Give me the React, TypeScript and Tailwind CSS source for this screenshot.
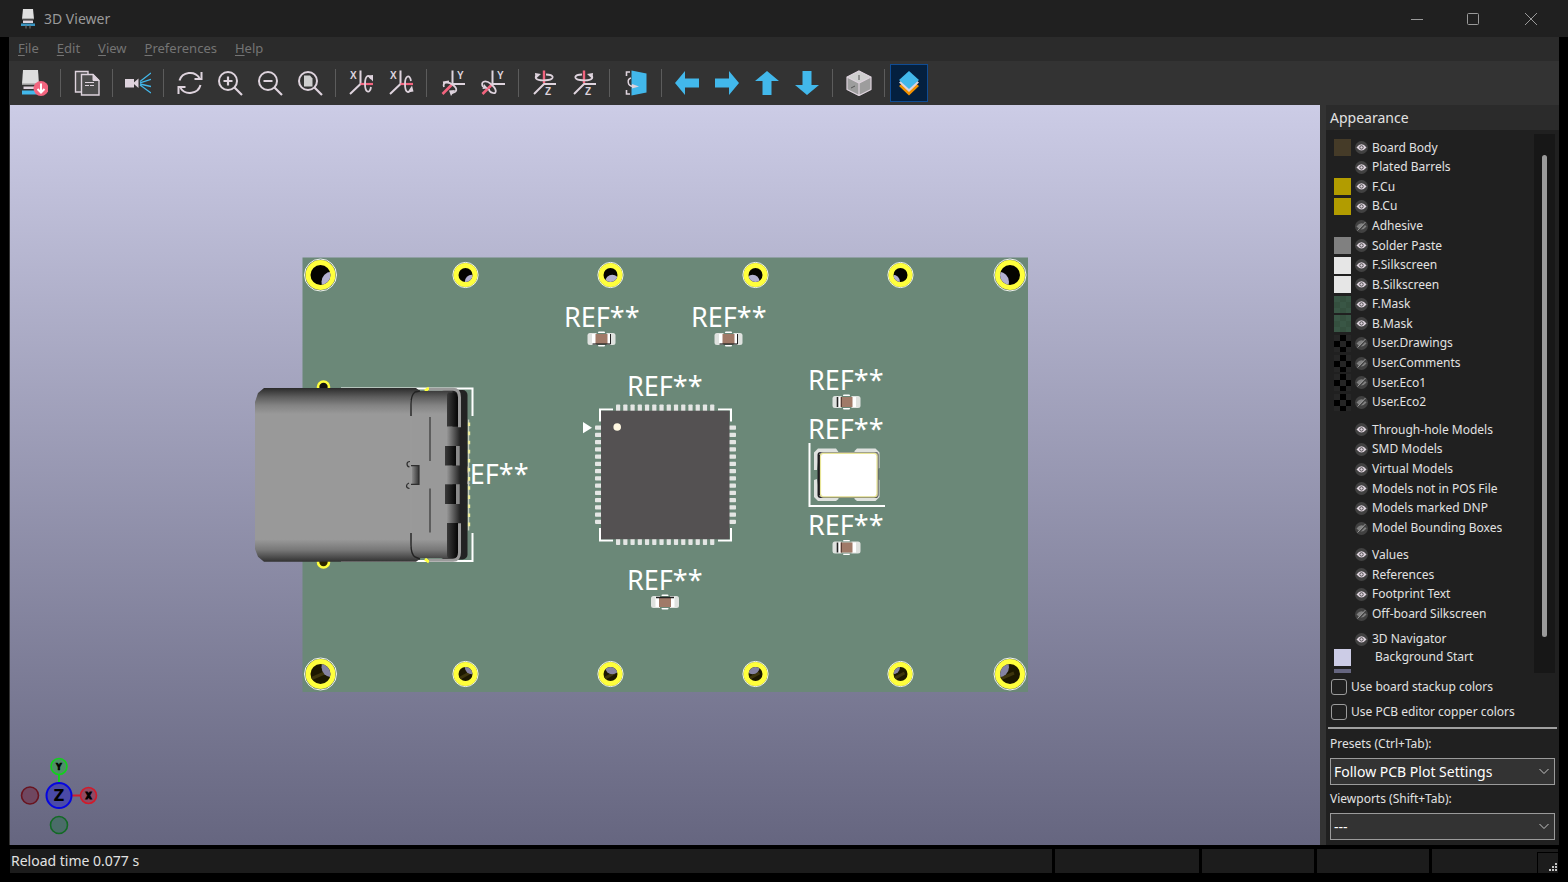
import type { ReactNode } from 'react';

type Layer = { name: string; swatch?: string; off?: boolean };

const CHECKER = 'bg-[repeating-conic-gradient(#000000_0_25%,#262626_0_50%)] bg-size-[12px_12px]';
const MASK = 'bg-[repeating-conic-gradient(#35503f_0_25%,#395645_0_50%)] bg-size-[12px_12px]';

const layers: Layer[] = [
  { name: 'Board Body', swatch: 'bg-[#453b28]' },
  { name: 'Plated Barrels' },
  { name: 'F.Cu', swatch: 'bg-[#b29c00]' },
  { name: 'B.Cu', swatch: 'bg-[#b29c00]' },
  { name: 'Adhesive', off: true },
  { name: 'Solder Paste', swatch: 'bg-[#808080]' },
  { name: 'F.Silkscreen', swatch: 'bg-[#e6e6e6]' },
  { name: 'B.Silkscreen', swatch: 'bg-[#e6e6e6]' },
  { name: 'F.Mask', swatch: MASK },
  { name: 'B.Mask', swatch: MASK },
  { name: 'User.Drawings', swatch: CHECKER, off: true },
  { name: 'User.Comments', swatch: CHECKER, off: true },
  { name: 'User.Eco1', swatch: CHECKER, off: true },
  { name: 'User.Eco2', swatch: CHECKER, off: true },
];

const models: Layer[] = [
  { name: 'Through-hole Models' },
  { name: 'SMD Models' },
  { name: 'Virtual Models' },
  { name: 'Models not in POS File' },
  { name: 'Models marked DNP' },
  { name: 'Model Bounding Boxes', off: true },
];

const texts: Layer[] = [
  { name: 'Values' },
  { name: 'References' },
  { name: 'Footprint Text' },
  { name: 'Off-board Silkscreen', off: true },
];

/* ---------- toolbar icons ---------- */

const INK = '#ded3dd';
const BLUE = '#42b8eb';
const RED = '#f2647e';

function Icon({ children }: { children: ReactNode }) {
  return (
    <svg width="26" height="26" viewBox="0 0 26 26" fill="none" stroke={INK} strokeWidth="1.8">
      {children}
    </svg>
  );
}

function Letter({ x, y, children }: { x: number; y: number; children: string }) {
  return (
    <text x={x} y={y} fill={INK} stroke="none" fontSize="10" fontWeight="700" fontFamily="Liberation Sans, sans-serif">
      {children}
    </text>
  );
}

const ReloadBoard = (
  <Icon>
    <g stroke="none">
      <path d="M1 0h15l1 14H0z" fill="#dedede" />
      <path d="M0 13.500h17v1.500H0z" fill="#999" />
      <path d="M1.500 16.500h14v2.500h-14z" fill={INK} />
      <path d="M0 20.500h17v4H0z" fill={BLUE} />
      <circle cx="19" cy="18.500" r="7.500" fill={RED} />
    </g>
    <path d="M19 13.500v8.500M15.500 19l3.500 3.500 3.500-3.500" stroke="#fff" strokeWidth="2" />
  </Icon>
);
const Copy = (
  <Icon>
    <path d="M14 22H1.500V1.500H14V5" strokeWidth="1.400" fill="#4c4c4c" />
    <path d="M7.500 4.500H19l6 6v14.500H7.500z" strokeWidth="1.400" fill="#4c4c4c" />
    <path d="M19 4.500v6h6z" fill={INK} strokeWidth="1" />
    <path d="M11 12.500h9M11 15.500h4M16 15.500h4" strokeWidth="1.200" />
  </Icon>
);
const Camera = (
  <Icon>
    <path d="M0 9h9v8.500H0zM8 13.200l5.500-4.700v9.500z" fill={INK} stroke="none" />
    <path d="M15 11.500L26 3M15 12.800l11-3.500M15 14l11 2.500M15 15l11 8" stroke={BLUE} strokeWidth="1.300" />
  </Icon>
);
const Refresh = (
  <Icon>
    <path d="M2.500 10.500A11 10.500 0 0 1 22.500 8M23.500 15A11 10.500 0 0 1 3.500 18" strokeWidth="2" />
    <path d="M24.500 2v7h-7M1.500 24v-7h7" strokeWidth="2" />
  </Icon>
);
const ZoomIn = (
  <Icon>
    <circle cx="11" cy="11" r="9" strokeWidth="2" />
    <path d="M17.500 17.500L25 25M6.500 11h9M11 6.500v9" strokeWidth="2.200" />
  </Icon>
);
const ZoomOut = (
  <Icon>
    <circle cx="11" cy="11" r="9" strokeWidth="2" />
    <path d="M17.500 17.500L25 25M6.500 11h9" strokeWidth="2.200" />
  </Icon>
);
const ZoomFit = (
  <Icon>
    <path d="M7 5.500h6l2.500 3v8H7z" fill="#cfcfcf" stroke="none" />
    <circle cx="11" cy="11" r="9" strokeWidth="2" />
    <path d="M17.500 17.500L25 25" strokeWidth="2.200" />
  </Icon>
);

function RotateX({ flip }: { flip?: boolean }) {
  return (
    <Icon>
      <Letter x={2} y={9}>X</Letter>
      <path d="M12.500 .5v13.500L2 24" strokeWidth="2" />
      <path d="M12.500 14H25" stroke={RED} strokeWidth="2.200" />
      {flip ? (
        <>
          <path d="M23 11c-1-7-6-6-6 3s4 10 6 5" />
          <path d="M19.500 22.500l6-1-1.500-6z" fill={INK} stroke="none" />
        </>
      ) : (
        <>
          <path d="M23 17c-1 7-6 6-6-3s4-10 6-5" />
          <path d="M19.500 5.500l5.500-.5v6.500z" fill={INK} stroke="none" />
        </>
      )}
    </Icon>
  );
}

function RotateY({ flip }: { flip?: boolean }) {
  return (
    <Icon>
      <Letter x={17} y={9}>Y</Letter>
      <path d="M12.500 .5V14H25" strokeWidth="2" />
      <path d="M12 14.500L2.500 24" stroke={RED} strokeWidth="2.600" />
      {flip ? (
        <>
          <path d="M3 17c-3-5 2-8 8-3s6 10 2 9-4-3-4-4" />
          <path d="M2.500 19l5.500-.5-4-4.500z" fill={INK} stroke="none" />
        </>
      ) : (
        <>
          <path d="M4 17c-2-5 4-6 9-2s4 7-1 8M3 12.500l6-1" />
          <path d="M9 20.500l6-.5-4 6z" fill={INK} stroke="none" />
        </>
      )}
    </Icon>
  );
}

function RotateZ({ flip }: { flip?: boolean }) {
  return (
    <Icon>
      <Letter x={14} y={24.5}>Z</Letter>
      <path d="M13 .5V13" stroke={RED} strokeWidth="2.400" />
      <path d="M25 14H13L3 24" strokeWidth="2" />
      {flip ? (
        <>
          <path d="M11 4.500C3 4.500 2 9 9 10s14 0 12-4" />
          <path d="M16 4l6-1-.5 6z" fill={INK} stroke="none" />
        </>
      ) : (
        <>
          <path d="M15 4.500C23 4.500 24 9 17 10S3 10 5 6" />
          <path d="M10 4L4 3l.5 6z" fill={INK} stroke="none" />
        </>
      )}
    </Icon>
  );
}

const FlipBoard = (
  <Icon>
    <path d="M7 2H3.500v4M3.500 20v4H7" strokeWidth="1.600" />
    <path d="M8.500 .5l15 3v19l-15 3z" fill={BLUE} stroke="none" />
    <path d="M8 8c-4 1-4 8 2 8.500" strokeWidth="1.500" />
    <path d="M9 14l7 2.500-7 2z" fill={INK} stroke="none" />
  </Icon>
);

function Arrow({ d }: { d: string }) {
  return (
    <Icon>
      <path d={d} fill={BLUE} stroke="none" />
    </Icon>
  );
}

const Cube = (
  <Icon>
    <path d="M13 1l12 6v13l-12 6-12-6V7z" fill="#9d9d9d" stroke="none" />
    <path d="M13 1l12 6-12 6L1 7z" fill="#cfcfcf" stroke="none" />
    <path d="M13 1l12 6v12.500L13 25.500 1 19.500V7zM1 7l12 6 12-6M13 13v12.500" strokeWidth="1.200" />
    <path d="M13 5v5M5 18l4-2" stroke="#555" strokeWidth="1" />
  </Icon>
);
const LayersIcon = (
  <Icon>
    <g stroke="none">
      <path d="M3 16l10 9.500L23 16l-3-2.500-7 6-7-6z" fill="#f29100" />
      <path d="M3 12.500L13 22l10-9.500-3-2.500-7 6-7-6z" fill={INK} />
      <path d="M13 1l10 9-10 9L3 10z" fill={BLUE} />
    </g>
  </Icon>
);

const toolGroups: { label: string; icon: ReactNode; active?: boolean }[][] = [
  [{ label: 'Reload board', icon: ReloadBoard }],
  [{ label: 'Copy image', icon: Copy }],
  [{ label: 'Raytracing', icon: Camera }],
  [
    { label: 'Redraw', icon: Refresh },
    { label: 'Zoom in', icon: ZoomIn },
    { label: 'Zoom out', icon: ZoomOut },
    { label: 'Zoom to fit', icon: ZoomFit },
  ],
  [
    { label: 'Rotate X clockwise', icon: <RotateX /> },
    { label: 'Rotate X counterclockwise', icon: <RotateX flip /> },
  ],
  [
    { label: 'Rotate Y clockwise', icon: <RotateY /> },
    { label: 'Rotate Y counterclockwise', icon: <RotateY flip /> },
  ],
  [
    { label: 'Rotate Z clockwise', icon: <RotateZ /> },
    { label: 'Rotate Z counterclockwise', icon: <RotateZ flip /> },
  ],
  [{ label: 'Flip board', icon: FlipBoard }],
  [
    { label: 'Pan left', icon: <Arrow d="M1 13L11 1v7.500h14v9H11V25z" /> },
    { label: 'Pan right', icon: <Arrow d="M25 13L15 1v7.500H1v9h14V25z" /> },
    { label: 'Pan up', icon: <Arrow d="M13 1l12 10h-7.500v14h-9V11H1z" /> },
    { label: 'Pan down', icon: <Arrow d="M13 25L1 15h7.500V1h9v14H25z" /> },
  ],
  [{ label: 'Orthographic projection', icon: Cube }],
  [{ label: 'Appearance manager', icon: LayersIcon, active: true }],
];

/* ---------- 3D scene ---------- */

const CENTER = { x: 665, y: 474 };

// plated hole; the back opening drifts towards the board centre
function Hole({ x, y, big }: { x: number; y: number; big?: boolean }) {
  const id = `hole-${x}-${y}`;
  const r = big ? 10 : 7;
  const low = y > CENTER.y;
  return (
    <g>
      <clipPath id={id}>
        <circle cx={x} cy={y} r={r} />
      </clipPath>
      <circle cx={x} cy={y} r={big ? 16 : 12.6} fill="#58706a" stroke="#f2f5ee" strokeWidth="1" />
      <circle cx={x} cy={y} r={big ? 15 : 12} fill="#ffff3c" />
      <circle cx={x} cy={y} r={r} fill={low ? '#1c1800' : '#050400'} />
      {low && <path d={`M${x - r} ${y + 5}L${x + 4} ${y - 1}`} stroke="#3d350c" strokeWidth="3" clipPath={`url(#${id})`} />}
      <circle
        cx={x + (CENTER.x - x) * 0.032}
        cy={y + (CENTER.y - y) * 0.034}
        r={r}
        fill={low ? '#8583a2' : '#b3b1d0'}
        clipPath={`url(#${id})`}
      />
    </g>
  );
}

function Ref({ x, y }: { x: number; y: number }) {
  return (
    <text x={x} y={y} fill="#fff" fontSize="27" fontFamily="Noto Sans, sans-serif">
      REF**
    </text>
  );
}

function Capacitor({ x, y, edge }: { x: number; y: number; edge: 'top' | 'bottom' | 'left' }) {
  return (
    <g transform={`translate(${x} ${y})`}>
      <path d="M-2.500-6.500h5M-2.500 6.500h5" stroke="#fff" strokeWidth="2" strokeLinecap="round" />
      <rect x="-14" y="-6" width="28" height="12" rx="2.500" fill="#dfe2df" />
      <rect x="-5" y="-6" width="10" height="12" fill="#6b8878" />
      <rect x="-9.500" y="-5" width="19" height="10" fill="#fff" />
      <rect x="-6" y="-5" width="12" height="10" fill="#a07a68" />
      {edge === 'top' && <path d="M-9-4.500H9" stroke="#222" strokeWidth="1.500" />}
      {edge === 'bottom' && <path d="M-9 5H9" stroke="#222" strokeWidth="1.200" />}
      {edge === 'bottom' && <path d="M9-5V5" stroke="#222" strokeWidth="1" />}
      {edge === 'left' && <path d="M-9-5V5" stroke="#222" strokeWidth="1.600" />}
      {edge === 'left' && <path d="M-5-5V5" stroke="#5a4038" strokeWidth="1" />}
    </g>
  );
}

function Chip() {
  const pins = Array.from({ length: 14 }, (_, i) => i * 7.24);
  return (
    <g>
      <g fill="#e4e6e4">
        {pins.map((p) => (
          <g key={p}>
            <rect x={616 + p} y="404.500" width="4.200" height="7" rx=".8" />
            <rect x={616 + p} y="538" width="4.200" height="7" rx=".8" />
            <rect x="595" y={425.600 + p} width="7" height="4.200" rx=".8" />
            <rect x="729" y={425.600 + p} width="7" height="4.200" rx=".8" />
          </g>
        ))}
      </g>
      <path
        d="M600 421.500v-12h13M718 409.500h13v12M600 528v12.500h13M718 540.500h13V528"
        fill="none"
        stroke="#fff"
        strokeWidth="2"
      />
      <rect x="601" y="410.700" width="128.500" height="128.500" fill="#545152" />
      <circle cx="617.200" cy="427" r="3.800" fill="#fff8e1" />
      <path d="M583 422l9 5.700-9 5.600z" fill="#fff" />
    </g>
  );
}

function Crystal() {
  return (
    <g>
      <path d="M809.500 443v63H885" fill="none" stroke="#fff" strokeWidth="2" />
      <g fill="#dfe2df">
        <path d="M818 448.500h18l2.500 3.500v10H818l-1 8h-3v-17.500z" />
        <path d="M857 448.500h18.500l4 4V468l-3 1.500-2-6H854.500V451z" />
        <path d="M814 480l3-1 2 12h19.500v8l-2.500 2H818l-4-4z" />
        <path d="M879.500 480l-3-1-2 12h-20v8l2.500 2h18.500l4-4z" />
      </g>
      <rect x="817.500" y="452" width="61" height="46" rx="3" fill="#222024" />
      <rect x="819" y="452" width="59.500" height="45.500" rx="3.500" fill="#8c8c88" />
      <path d="M819 455v40" stroke="#1c1a1e" strokeWidth="2" />
      <rect x="820.500" y="453.300" width="56.500" height="43.500" rx="3" fill="#fff" stroke="#e8e596" strokeWidth="1.200" />
    </g>
  );
}

function UsbConnector() {
  return (
    <g>
      <circle cx="323.500" cy="387" r="5.500" fill="#111" stroke="#ffff3c" strokeWidth="2.600" />
      <circle cx="323.500" cy="562" r="5.500" fill="#2a2400" stroke="#ffff3c" strokeWidth="2.600" />
      <path d="M341 388.500H472.500V416M341 561H472.500V533" fill="none" stroke="#fff" strokeWidth="2" />
      <path d="M468.500 419.500v111" stroke="#c9cfc0" strokeWidth="1.500" />
      <path d="M469 422.500v108" stroke="#efeea0" strokeWidth="2.400" strokeDasharray="3.600 5.500" />
      <rect x="440" y="390" width="27.500" height="169.500" rx="5" fill="#232323" />
      <path d="M425 391l4-3M425 559l4 3" stroke="#ffff3c" strokeWidth="3" />
      <rect x="410.500" y="391" width="42" height="167" fill="url(#shell)" />
      <path d="M447 426.500h13v19.500h-13M447 465.500h13v19h-13M447 504h13v19h-13z" fill="url(#edge)" />
      <g fill="url(#slot)">
        <path d="M448 392.500h6q4 0 4 5v29h-11v-32z" />
        <path d="M447 523h11v30q0 5-4 5h-6l-1-2z" />
        <rect x="445" y="446" width="11" height="19.500" />
        <rect x="445" y="484.300" width="11" height="19.700" />
      </g>
      <path d="M456 446h3.700v19.500H456zM456 484.300h3.700V504H456z" fill="#8a8a8a" />
      <path
        d="M429 389.200h24q6.500 0 6.500 8v30M429 560.200h24q6.500 0 6.500-8v-29"
        fill="none"
        stroke="#9a9a9a"
        strokeWidth="3"
      />
      <path d="M264 388h152l4 3-6 3-3 8v145l3 8 6 4-4 2.800H264l-6-5-3-7.800V402l3-9z" fill="url(#shell)" />
      <path d="M411 400v147" stroke="#9a9a9a" strokeWidth="2" />
      <path d="M411 416v-12q0-9 4-12l5-1M411 533v12q0 9 4 12l5 2" fill="none" stroke="#222" strokeWidth="1.400" />
      <path d="M430 417v44M430 488.500v44" stroke="#4a4a4a" strokeWidth="1.500" />
      <rect x="412" y="466" width="7" height="18" fill="url(#tab)" />
      <path
        d="M411 465.700h8v18.600h-8M410 461.500q-3 0-3 2.500t2.500 3M409 483q-2.500 1-2.500 3t3 2.500"
        fill="none"
        stroke="#2f2f2f"
        strokeWidth="1.200"
      />
    </g>
  );
}

function Gizmo() {
  return (
    <g fontFamily="DejaVu Sans, sans-serif" fontWeight="700" textAnchor="middle" strokeWidth="1.600">
      <path d="M59 774v9" stroke="#11d21b" strokeWidth="2" />
      <path d="M72 795.500h9" stroke="#d31a2a" strokeWidth="2" />
      <circle cx="59" cy="766.500" r="8" fill="#4f8f68" stroke="#11d21b" />
      <circle cx="30" cy="795.500" r="8.500" fill="#6f4760" stroke="#69141f" />
      <circle cx="88.500" cy="795.500" r="8" fill="#8f4a64" stroke="#d31a2a" />
      <circle cx="59" cy="825" r="8.500" fill="#4b6c69" stroke="#126a24" />
      <circle cx="59" cy="795.500" r="12.500" fill="#4a4aa8" stroke="#0505e0" strokeWidth="2" />
      <text x="59" y="769.500" fontSize="8" fill="#000" stroke="#000" strokeWidth=".6">Y</text>
      <text x="88.500" y="798.500" fontSize="8" fill="#000" stroke="#000" strokeWidth="1">X</text>
      <text x="59" y="801" fontSize="15" fill="#000">Z</text>
    </g>
  );
}

function Scene() {
  return (
    <svg className="block h-full w-full" viewBox="10 105 1310 740" role="img" aria-label="3D board">
      <defs>
        <linearGradient id="shell" x1="0" y1="388" x2="0" y2="562" gradientUnits="userSpaceOnUse">
          <stop offset="0" stopColor="#2b2b2b" />
          <stop offset=".05" stopColor="#5c5c5c" />
          <stop offset=".1" stopColor="#838383" />
          <stop offset=".15" stopColor="#999999" />
          <stop offset=".87" stopColor="#999999" />
          <stop offset=".93" stopColor="#787878" />
          <stop offset="1" stopColor="#303030" />
        </linearGradient>
        <linearGradient id="edge">
          <stop offset="0" stopColor="#959595" />
          <stop offset="1" stopColor="#232323" />
        </linearGradient>
        <linearGradient id="slot">
          <stop offset="0" stopColor="#3a3a3a" />
          <stop offset="1" stopColor="#050505" />
        </linearGradient>
        <linearGradient id="tab">
          <stop offset="0" stopColor="#8a8a8a" />
          <stop offset="1" stopColor="#333333" />
        </linearGradient>
      </defs>
      <rect x="302.500" y="257.500" width="725.500" height="434.500" fill="#6b8878" />
      {[275, 674].map((y) => (
        <g key={y}>
          <Hole x={320.5} y={y} big />
          <Hole x={465.5} y={y} />
          <Hole x={610.5} y={y} />
          <Hole x={755.5} y={y} />
          <Hole x={900.5} y={y} />
          <Hole x={1010} y={y} big />
        </g>
      ))}
      <Ref x={564} y={327} />
      <Ref x={691} y={327} />
      <Ref x={627} y={396} />
      <Ref x={627} y={590} />
      <Ref x={808} y={390} />
      <Ref x={808} y={439} />
      <Ref x={808} y={535} />
      <Ref x={453} y={484} />
      <Capacitor x={601.5} y={339} edge="bottom" />
      <Capacitor x={728.5} y={339} edge="bottom" />
      <Capacitor x={846.5} y={402} edge="left" />
      <Capacitor x={846.5} y={547.5} edge="left" />
      <Capacitor x={665} y={602} edge="top" />
      <Chip />
      <Crystal />
      <UsbConnector />
      <Gizmo />
    </svg>
  );
}

/* ---------- appearance panel ---------- */

function Eye({ off }: { off?: boolean }) {
  return (
    <svg width="13" height="13" viewBox="0 0 13 13" fill="none">
      <circle cx="6.500" cy="6.500" r="6.500" fill="#414141" />
      <path d="M1.500 6.500Q6.500 0 11.500 6.500Q6.500 12.500 1.500 6.500z" fill={off ? '#808080' : '#ded3dd'} />
      {off ? (
        <path d="M3 11.500L11 3" stroke="#414141" strokeWidth="1.400" />
      ) : (
        <circle cx="6.500" cy="6.400" r="1.700" stroke="#414141" strokeWidth=".9" />
      )}
      {off && <path d="M2.500 10.500L10.500 2" stroke="#9a9a9a" strokeWidth="1" />}
    </svg>
  );
}

function LayerRow({ name, swatch, off }: Layer) {
  return (
    <li className="flex items-center">
      <span className="mr-1 w-[17px]">
        {swatch && <button aria-label={`${name} color`} className={`block size-[17px] ${swatch}`} />}
      </span>
      <button aria-label={`Show ${name}`} aria-pressed={!off} className="mr-1">
        <Eye off={off} />
      </button>
      <span>{name}</span>
    </li>
  );
}

function Select({ id, label, value }: { id: string; label: string; value: string }) {
  return (
    <div>
      <label htmlFor={id} className="block h-7 leading-7">{label}</label>
      <div className="relative">
        <select
          id={id}
          className="block h-[27px] w-full appearance-none border border-[#9b9b9b] bg-[#333] px-[3px] text-sm leading-6 text-white"
        >
          <option>{value}</option>
        </select>
        <svg className="pointer-events-none absolute top-2 right-1.5" width="10" height="10" viewBox="0 0 10 10" fill="none">
          <path d="M.5 3L5 7.500 9.500 3" stroke="#c4c4c4" />
        </svg>
      </div>
    </div>
  );
}

function Appearance() {
  return (
    <aside className="flex w-[233px] shrink-0 flex-col bg-[#202020] text-xs text-[#e2e2e2]">
      <h2 className="h-[25px] bg-[#2b2b2b] pl-1 text-sm leading-[25px]">Appearance</h2>
      <div className="flex min-h-0 flex-1 justify-between overflow-hidden pt-1 pr-1 pl-2">
        <div className="overflow-hidden whitespace-nowrap">
          <ul className="mt-1 grid h-[274px] auto-rows-fr">
            {layers.map((l) => <LayerRow key={l.name} {...l} />)}
          </ul>
          <ul className="mt-2 grid h-[118px] auto-rows-fr">
            {models.map((l) => <LayerRow key={l.name} {...l} />)}
          </ul>
          <ul className="mt-[7px] grid h-[79px] auto-rows-fr">
            {texts.map((l) => <LayerRow key={l.name} {...l} />)}
          </ul>
          <ul className="mt-[7px]">
            <LayerRow name="3D Navigator" />
            <li className="flex h-5 items-center gap-6">
              <button aria-label="Background Start color" className="size-[17px] bg-[#cccce6]" />
              Background Start
            </li>
            <li className="flex h-5 items-center">
              <button aria-label="Background End color" className="size-[17px] bg-[#666680]" />
            </li>
          </ul>
        </div>
        <div className="flex w-[21px] justify-center bg-[#171717] pt-[21px] pb-9">
          <div className="w-[5px] rounded-full bg-[#9a9a9a]" />
        </div>
      </div>
      <div className="pt-px pl-[5px]">
        {['Use board stackup colors', 'Use PCB editor copper colors'].map((text) => (
          <label key={text} className="flex h-[25px] items-center gap-1">
            <input type="checkbox" className="size-4 appearance-none rounded-[3px] border border-[#9b9b9b]" />
            {text}
          </label>
        ))}
      </div>
      <hr className="mx-0.5 mt-[3px] border-t-2 border-[#a0a0a0]" />
      <div className="px-1 pt-px pb-[5px]">
        <Select id="presets" label="Presets (Ctrl+Tab):" value="Follow PCB Plot Settings" />
        <Select id="viewports" label="Viewports (Shift+Tab):" value="---" />
      </div>
    </aside>
  );
}

function TitleBar() {
  return (
    <header className="flex h-[37px] shrink-0 items-center bg-[#202020] pl-5 text-[#9a9a9a]">
      <svg width="16" height="20" viewBox="0 0 16 20" fill="none">
        <path d="M3 0h10l1 10H2z" fill="#e0e0e0" />
        <path d="M2 9.500h12v1H2z" fill="#777" />
        <path d="M3 11.500h10V14H3z" fill="#ded3dd" />
        <path d="M1 14.500h14v2.500H1z" fill="#3a96c4" />
        <path d="M6 16v3.500M10 16v3.500" stroke="#777" />
      </svg>
      <h1 className="ml-2 flex-1 text-sm">3D Viewer</h1>
      <button aria-label="Minimize" className="flex h-full w-14 items-center justify-center">
        <svg width="12" height="12" viewBox="0 0 12 12"><path d="M0 6.500h12" stroke="#9a9a9a" /></svg>
      </button>
      <button aria-label="Maximize" className="flex h-full w-14 items-center justify-center">
        <svg width="12" height="12" viewBox="0 0 12 12"><rect x=".5" y=".5" width="11" height="11" rx="1" fill="none" stroke="#9a9a9a" /></svg>
      </button>
      <button aria-label="Close" className="mr-[7px] flex h-full w-[60px] items-center justify-center">
        <svg width="12" height="12" viewBox="0 0 12 12"><path d="M0 0l12 12M12 0L0 12" stroke="#9a9a9a" /></svg>
      </button>
    </header>
  );
}

export default function App() {
  return (
    <div className="flex h-screen flex-col bg-black font-['Noto_Sans','Open_Sans',sans-serif]">
      <TitleBar />
      <div className="mr-[9px] ml-[9px] flex min-h-0 flex-1 flex-col bg-[#333]">
        <nav className="flex h-6 shrink-0 items-center gap-[18px] bg-[#2b2b2b] pl-[9px] text-[13px] text-[#747474]">
          {['File', 'Edit', 'View', 'Preferences', 'Help'].map((m) => (
            <button key={m}>
              <span className="underline underline-offset-2">{m[0]}</span>
              {m.slice(1)}
            </button>
          ))}
        </nav>
        <div className="h-11 shrink-0">
          <div className="flex h-[43px] w-[919px] items-center justify-between pl-1.5">
            {toolGroups.flatMap((group, i) => [
              i > 0 && <span key={`sep-${i}`} className="h-7 w-px bg-[#5c5c5c]" />,
              <div key={i} className="flex">
                {group.map((t) => (
                  <button
                    key={t.label}
                    aria-label={t.label}
                    className={`flex h-[38px] items-center justify-center ${t.active ? 'w-[38px] border border-[#0f4c94] bg-[#04203f]' : 'w-10'}`}
                  >
                    {t.icon}
                  </button>
                ))}
              </div>,
            ])}
          </div>
        </div>
        <div className="flex min-h-0 flex-1">
          <main className="ml-px min-w-0 flex-1 bg-linear-to-b from-[#cccce6] to-[#666680]">
            <Scene />
          </main>
          <div className="w-1.5 shrink-0 bg-[#333]" />
          <Appearance />
        </div>
      </div>
      <footer className="mx-[10px] mt-1 mb-[9px] flex h-6 shrink-0 gap-[3px] text-sm leading-6 text-[#e2e2e2]">
        <div className="flex-1 bg-[#1c1c1c] pl-px">Reload time 0.077 s</div>
        <div className="w-36 bg-[#1c1c1c]" />
        <div className="w-28 bg-[#1c1c1c]" />
        <div className="w-28 bg-[#1c1c1c]" />
        <div className="flex w-[126px] items-end justify-end bg-[#1c1c1c]">
          <div className="flex h-[21px] w-[21px] items-end justify-end border-t border-l border-black">
            <svg width="11" height="11" viewBox="0 0 11 11" fill="#c4c4c4">
              <path d="M8 1h2v2H8zM5 4h2v2H5zM8 4h2v2H8zM2 7h2v2H2zM5 7h2v2H5zM8 7h2v2H8z" />
            </svg>
          </div>
        </div>
      </footer>
    </div>
  );
}
